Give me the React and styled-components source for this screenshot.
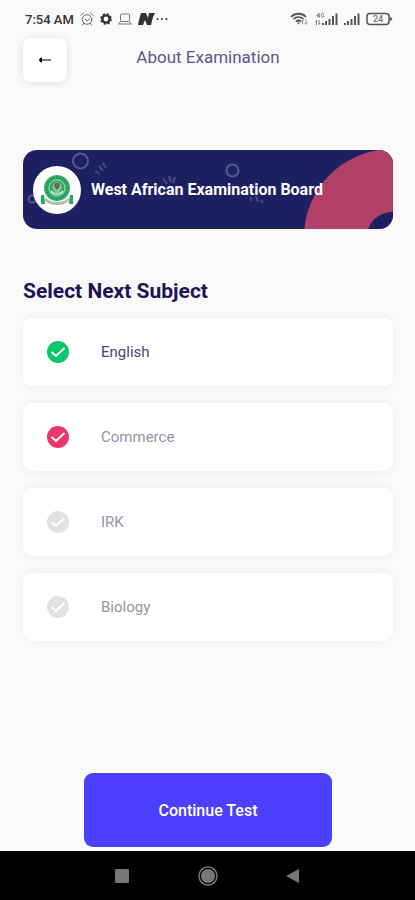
import React, { useState } from 'react';
import styled, { createGlobalStyle } from 'styled-components';

const GlobalStyle = createGlobalStyle`
  * {
    box-sizing: border-box;
  }

  body {
    margin: 0;
    background: #fafafa;
    font-family: Roboto, 'Liberation Sans', sans-serif;
  }

  button {
    border: 0;
    padding: 0;
    font-family: inherit;
    cursor: pointer;
  }
`;

const Screen = styled.div`
  min-height: 100vh;
  display: flex;
  flex-direction: column;
`;

const StatusBar = styled.div`
  height: 38px;
  padding: 0 22px 0 25px;
  display: flex;
  justify-content: space-between;
  align-items: center;
  color: #333;
  font-size: 13px;
  font-weight: 500;
`;

const StatusGroup = styled.div`
  display: flex;
  align-items: center;
  gap: 6px;
`;

const Header = styled.header`
  padding: 0 22px 0 23px;
  display: grid;
  grid-template-columns: 44px 1fr 44px;
  align-items: center;
`;

const BackButton = styled.button`
  height: 44px;
  display: flex;
  justify-content: center;
  align-items: center;
  background: #fff;
  border-radius: 8px;
  box-shadow: 0 1px 8px rgba(0, 0, 0, 0.12);
`;

const Title = styled.h1`
  margin: 0;
  padding-bottom: 6px;
  color: #5c578c;
  font-size: 17px;
  font-weight: 400;
  line-height: 20px;
  text-align: center;
`;

const Main = styled.main`
  flex: 1;
  padding: 68px 22px 4px 23px;
  display: flex;
  flex-direction: column;
`;

const Banner = styled.section`
  position: relative;
  height: 79px;
  padding-left: 10px;
  display: flex;
  align-items: center;
  gap: 10px;
  background: #1e2161;
  border-radius: 14px;
  overflow: hidden;
`;

const BannerArt = styled.svg`
  position: absolute;
  top: 0;
  ${({ $side }) => $side}: 0;
  height: 100%;
`;

const BannerLogo = styled.div`
  position: relative;
  width: 48px;
  height: 48px;
  background: #fff;
  border-radius: 50%;
`;

const BannerText = styled.p`
  position: relative;
  margin: 0;
  color: #fff;
  font-size: 16px;
  font-weight: 700;
`;

const Heading = styled.h2`
  margin: 50px 0 14px;
  color: #1c1656;
  font-size: 21px;
  font-weight: 700;
  line-height: 25px;
`;

const SubjectList = styled.div`
  display: flex;
  flex-direction: column;
  gap: 17px;
`;

const SubjectCard = styled.label`
  height: 68px;
  padding-left: 24px;
  display: flex;
  align-items: center;
  gap: 32px;
  background: #fff;
  border-radius: 9px;
  box-shadow: 0 0 14px rgba(0, 0, 0, 0.06);
  color: ${({ $done }) => ($done ? '#4c467c' : '#9694ad')};
  font-size: 15px;
  cursor: pointer;
`;

const CheckMark = styled.span`
  display: grid;

  > * {
    grid-area: 1 / 1;
  }

  svg {
    pointer-events: none;
  }
`;

const CheckInput = styled.input`
  appearance: none;
  width: 22px;
  height: 22px;
  margin: 0;
  background: #e2e2e2;
  border-radius: 50%;

  &:checked {
    background: ${({ $color }) => $color};
  }
`;

const ContinueButton = styled.button`
  width: 67%;
  height: 74px;
  margin: auto auto 0;
  background: #4c3fff;
  border-radius: 9px;
  color: #fff;
  font-size: 16px;
  font-weight: 500;
`;

const NavBar = styled.nav`
  height: 49px;
  padding: 0 108px;
  display: flex;
  justify-content: space-between;
  align-items: center;
  background: #000;
`;

const NavButton = styled.button`
  width: 28px;
  height: 28px;
  background: none;
`;

const AlarmIcon = () => (
    <svg width="14" height="14" viewBox="0 0 14 14" fill="none" stroke="#666" strokeLinecap="round">
        <circle cx="7" cy="7.5" r="4.8" />
        <path d="M1 3.5 3.5 1M13 3.5 10.5 1M5 7l2 2 2.5-2M3.5 11.5 2.5 13M10.5 11.5l1 1.5" />
    </svg>
);

const GearIcon = () => (
    <svg width="12" height="12" viewBox="0 0 12 12" fill="none" stroke="#333">
        <circle cx="6" cy="6" r="3.6" strokeWidth="2.4" />
        <circle cx="6" cy="6" r="5" strokeWidth="1.6" strokeDasharray="2.2 1.73" />
    </svg>
);

const LaptopIcon = () => (
    <svg width="14" height="12" viewBox="0 0 14 12" fill="none" stroke="#777">
        <rect x="2.5" y="1" width="9" height="7.5" rx="1" />
        <path d="M.5 11h13M2.5 8.5.8 11M11.5 8.5l1.7 2.5" />
    </svg>
);

const NewsIcon = () => (
    <svg width="32" height="14" viewBox="0 0 32 14" fill="#333">
        <path d="M3 1h5l2 5 1-5h6l-2 4-2 8H9L7 8l-2 5H0l1-5z" />
        <circle cx="19.5" cy="7" r="1" />
        <circle cx="24" cy="7" r="1" />
        <circle cx="28.5" cy="7" r="1" />
    </svg>
);

const WifiIcon = () => (
    <svg width="19" height="14" viewBox="0 0 19 14" fill="none" stroke="#555" strokeWidth="1.8">
        <path d="M1 4.8C5 .7 12 .7 16 4.8M3.5 7.2c3-2.8 7-2.8 10 0M6 9.6c1.5-1.4 3.5-1.4 5 0" />
        <path d="M7 10.5h3L8.5 12.5z" fill="#555" stroke="none" />
        <path d="M12.5 12.5V8M11 9.5 12.5 8 14 9.5M16 7v5M14.5 10.8 16 12.5l1.5-1.7" stroke="#999" strokeWidth="1" />
    </svg>
);

const SignalIcon = ({ fourG }) => (
    <svg width={fourG ? 23 : 16} height="14" viewBox={fourG ? '-7 0 23 14' : '0 0 16 14'} fill="#555">
        <path d="M0 11h2v2H0zM3 9h2v4H3zM6.5 7h2v6h-2zM10 4h2v9h-2zM13.5 1.5h2V13h-2z" />
        {fourG && (
            <path
                d="M-3 1-5.5 4H-2M-3 1v5M2 2.2C0 .5-1 2-.5 4S2 5.5 2 4H1M-5.5 13V8.5l-1 1.5M-3 8v4.5l1-1.5"
                fill="none"
                stroke="#777"
            />
        )}
    </svg>
);

const BatteryIcon = () => (
    <svg width="27" height="14" viewBox="0 0 27 14">
        <rect x="1" y="1.5" width="22" height="11" rx="3" fill="none" stroke="#555" strokeWidth="1.5" />
        <path d="M24 4.5 26.5 7 24 9.5z" fill="#555" />
        <text x="12" y="10" fill="#777" fontSize="9" textAnchor="middle">24</text>
    </svg>
);

const ArrowIcon = () => (
    <svg width="14" height="8" viewBox="0 0 14 8">
        <path d="M3 4h10" stroke="#555" strokeWidth="1.5" />
        <path d="M1 4 2 2l2-.5v5L2 6z" fill="#000" />
    </svg>
);

const BoardLogo = () => (
    <svg width="48" height="48" viewBox="0 0 48 48">
        <path d="M12 33c5 6 19 6 24 0" fill="none" stroke="#b5bdb7" strokeWidth="3" />
        <circle cx="24" cy="22" r="13" fill="#3fb573" />
        <circle cx="24" cy="22" r="10.5" fill="none" stroke="#249a57" strokeWidth="3" strokeDasharray="2 1" />
        <circle cx="24" cy="22" r="8" fill="#2ea665" stroke="#9bd9b5" />
        <path d="M19 21c1-4 3-5 5-5s4 1 5 5l-3 6h-4z" fill="#82c49b" />
        <path d="M22 17h4l1 3-3 4-3-4z" fill="#5b6a37" />
        <path d="M23 18h2v3h-2z" fill="#b5503c" />
        <path d="M18 25c3 4 9 4 12 0" fill="none" stroke="#d9eee0" strokeWidth="1.5" />
        <path d="M8 29h3l1 9H8zM37 29h3v9h-4z" fill="#24a861" />
    </svg>
);

const Shapes = () => (
    <>
        <BannerArt $side="left" viewBox="0 0 250 79" fill="none" stroke="#55588c" strokeWidth="2" aria-hidden="true">
            <circle cx="57.5" cy="11" r="7.5" />
            <circle cx="9" cy="49" r="3.5" />
            <circle cx="209.5" cy="20.5" r="6" />
            <path
                d="M72 21l5 3M76 16l4 5M80 13l3 5M140 28l4 6M146 26l2 6M152 27l-2 6M228 47v4M233 46l2 6M238 50l2 3"
                stroke="#484b80"
            />
        </BannerArt>
        <BannerArt $side="right" viewBox="0 0 95 79" aria-hidden="true">
            <circle cx="94" cy="87" r="88" fill="#b23f68" />
            <circle cx="94" cy="87" r="25" fill="#1e2161" />
        </BannerArt>
    </>
);

const subjects = [
    { name: 'English', color: '#08c76b', checked: true, done: true },
    { name: 'Commerce', color: '#ec376d', checked: true },
    { name: 'IRK', color: '#ec376d', checked: false },
    { name: 'Biology', color: '#ec376d', checked: false },
];

const Subject = ({ item }) => {
    const [checked, setChecked] = useState(item.checked);

    return (
        <SubjectCard $done={item.done}>
            <CheckMark>
                <CheckInput
                    type="checkbox"
                    $color={item.color}
                    checked={checked}
                    onChange={() => setChecked(!checked)}
                />
                <svg width="22" height="22" viewBox="0 0 22 22" fill="none" stroke="#fff" strokeWidth="2">
                    <path d="M4.5 11 9 15l8.500-8" />
                </svg>
            </CheckMark>
            {item.name}
        </SubjectCard>
    );
};

const App = () => {
    return (
        <>
            <GlobalStyle />
            <Screen>
                <StatusBar>
                    <StatusGroup>
                        <span>7:54 AM</span>
                        <AlarmIcon />
                        <GearIcon />
                        <LaptopIcon />
                        <NewsIcon />
                    </StatusGroup>
                    <StatusGroup>
                        <WifiIcon />
                        <SignalIcon fourG />
                        <SignalIcon />
                        <BatteryIcon />
                    </StatusGroup>
                </StatusBar>
                <Header>
                    <BackButton aria-label="Back">
                        <ArrowIcon />
                    </BackButton>
                    <Title>About Examination</Title>
                </Header>
                <Main>
                    <Banner>
                        <Shapes />
                        <BannerLogo>
                            <BoardLogo />
                        </BannerLogo>
                        <BannerText>West African Examination Board</BannerText>
                    </Banner>
                    <Heading>Select Next Subject</Heading>
                    <SubjectList>
                        {subjects.map((item) => (
                            <Subject item={item} key={item.name} />
                        ))}
                    </SubjectList>
                    <ContinueButton>Continue Test</ContinueButton>
                </Main>
                <NavBar>
                    <NavButton aria-label="Recent apps">
                        <svg width="28" height="28" viewBox="0 0 28 28" fill="#777">
                            <rect x="7" y="7" width="14" height="14" rx="1" />
                        </svg>
                    </NavButton>
                    <NavButton aria-label="Home">
                        <svg width="28" height="28" viewBox="0 0 28 28" fill="#777">
                            <circle cx="14" cy="14" r="7" />
                            <circle cx="14" cy="14" r="9" fill="none" stroke="#777" strokeWidth="1.5" />
                        </svg>
                    </NavButton>
                    <NavButton aria-label="Go back">
                        <svg width="28" height="28" viewBox="0 0 28 28" fill="#777">
                            <path d="M7 14 20 7v14z" />
                        </svg>
                    </NavButton>
                </NavBar>
            </Screen>
        </>
    );
};

export default App;
